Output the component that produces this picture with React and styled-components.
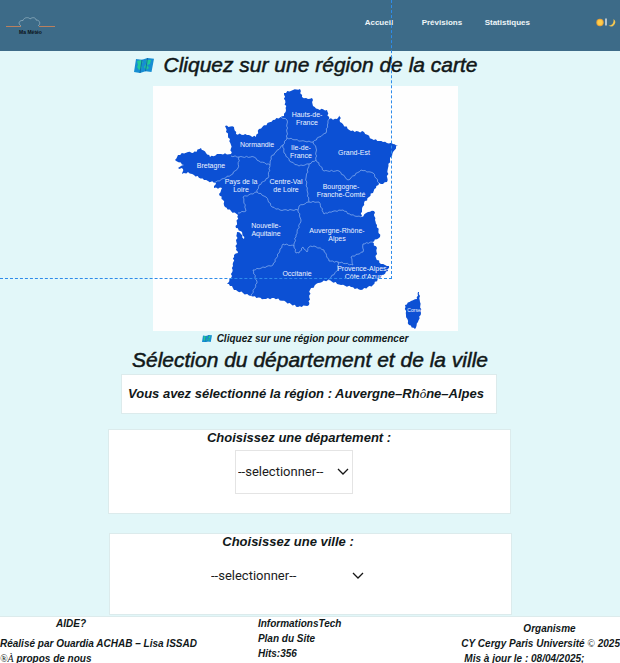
import React from "react";
import styled, { createGlobalStyle, css } from "styled-components";

const GlobalStyle = createGlobalStyle`
  *, *::before, *::after { box-sizing: border-box; }
  html { background: #e2f7f9; }
  body {
    margin: 0;
    font-family: "Liberation Sans", Arial, sans-serif;
    color: #111819;
    overflow-x: hidden;
  }
  h1, h2, p { margin: 0; }
`;

const Page = styled.div`
  position: relative;
  display: flex;
  flex-direction: column;
  background: #e2f7f9;
`;

const Header = styled.header`
  display: flex;
  align-items: center;
  justify-content: space-between;
  height: 51px;
  padding: 0 4px 6px 6px;
  background: #3d6b88;
`;

const Brand = styled.a`
  display: flex;
  flex-direction: column;
  align-items: center;
  width: 49px;
  padding-top: 7px;
  color: #0b1218;
  font-size: 5px;
  line-height: 8px;
  font-weight: 700;
  text-decoration: none;
  svg { display: block; }
`;

const Nav = styled.nav`
  display: grid;
  grid-template-columns: 57px 63px auto;
  align-items: center;
  margin-left: auto;
  margin-right: 66px;
`;

const NavLink = styled.a`
  color: #eef5f8;
  font: 700 8px/12px "Liberation Sans", sans-serif;
  text-decoration: none;
`;

const ThemeToggle = styled.button`
  display: flex;
  padding: 0;
  border: 0;
  background: none;
  svg { display: block; }
`;

const Main = styled.main`
  display: flex;
  flex-direction: column;
  align-items: center;
`;

const heading = css`
  font-size: 21px;
  line-height: 28px;
  font-weight: 400;
  font-style: italic;
  -webkit-text-stroke: 0.5px currentColor;
`;

const Title = styled.h1`
  ${heading}
  display: flex;
  align-items: center;
  gap: 9px;
  padding: 0 8px 7px 0;
`;

const MapFrame = styled.figure`
  width: 100%;
  max-width: 305px;
  margin: 0 10px 0 0;
  background: #fefefe;
  svg { display: block; width: 100%; }
`;

const Hint = styled.p`
  display: flex;
  align-items: center;
  gap: 5px;
  padding-right: 10px;
  font-size: 10px;
  line-height: 15px;
  font-weight: 700;
  font-style: italic;
`;

const SectionTitle = styled.h2`
  ${heading}
`;

const panel = css`
  border: 1px solid #dcebec;
  background: #fff;
`;

const Selected = styled.p`
  ${panel}
  width: 100%;
  max-width: 376px;
  margin-right: 2px;
  padding: 9px 6px;
  font-size: 13px;
  line-height: 20px;
  font-weight: 700;
  font-style: italic;
`;

const Field = styled.section`
  ${panel}
  display: flex;
  flex-direction: column;
  align-items: center;
  width: 100%;
  max-width: 403px;
  min-height: ${(p) => (p.$short ? 82 : 85)}px;
  margin-top: ${(p) => (p.$short ? 19 : 15)}px;
  margin-right: ${(p) => (p.$short ? 0 : 2)}px;
  margin-bottom: ${(p) => (p.$short ? 1 : 0)}px;
`;

const FieldLabel = styled.label`
  padding-right: ${(p) => (p.$wide ? 44 : 20)}px;
  font-size: 13px;
  line-height: 16px;
  font-weight: 700;
  font-style: italic;
`;

const SelectBox = styled.div`
  display: grid;
  grid-template-columns: 1fr;
  align-items: center;
  width: ${(p) => (p.$plain ? 158 : 118)}px;
  height: 44px;
  margin-top: 4px;
  margin-right: ${(p) => (p.$plain ? 46 : 30)}px;
  border: 1px solid ${(p) => (p.$plain ? "transparent" : "#e4e4e4")};
  svg {
    grid-area: 1 / 1;
    justify-self: end;
    margin-right: ${(p) => (p.$plain ? 1 : 3)}px;
    pointer-events: none;
  }
`;

const Select = styled.select`
  grid-area: 1 / 1;
  width: 100%;
  height: 42px;
  padding: 0 0 0 2px;
  border: 0;
  background: transparent;
  appearance: none;
  color: #1b1b1b;
  font: 400 13px/20px Roboto, sans-serif;
`;

const Footer = styled.footer`
  display: grid;
  grid-template-columns: auto 1fr auto;
  border-top: 1px solid #dcebec;
  background: #fff;
  font-size: 10px;
  line-height: 13px;
  font-weight: 700;
  font-style: italic;
  white-space: nowrap;
  column-gap: 61px;
`;

const FooterColumn = styled.div`
  display: flex;
  flex-direction: column;
  gap: 2px;
  padding-top: ${(p) => p.$top || 0}px;
`;

const FooterLine = styled.p`
  padding-left: ${(p) => p.$indent || 0}px;
  padding-bottom: ${(p) => p.$after || 0}px;
`;

const FooterLink = styled.a`
  color: inherit;
  text-decoration: none;
`;

const Serif = styled.span`
  font-family: "Liberation Serif", serif;
  font-weight: 400;
  line-height: 1;
`;

const Guide = styled.div`
  position: absolute;
  top: 0;
  left: 0;
  width: 392px;
  height: 279px;
  border-right: 1px dashed #2f8cea;
  border-bottom: 1px dashed #2f8cea;
  pointer-events: none;
`;

function MapIcon({ size }) {
  return (
    <svg width={size} height={size * 0.75} viewBox="0 0 20 15" aria-hidden="true">
      <path d="M2 1l6 .8L13.500 0 20 .7 17.500 14l-6-.8L6 15 0 14z" fill="#168ed2" />
      <path d="M3 3l4-1 2 2-2 3 1 3-3 2-2-3 1-2zM12 2l5 0-1 4-3 1 2 3-3 2-2-3 2-3z" fill="#20c998" />
      <path d="M8 1.800L6 15M13.500 0l-2 13.200" stroke="#126ba9" strokeWidth="1" />
    </svg>
  );
}

function Chevron() {
  return (
    <svg width="12" height="8" viewBox="0 0 12 8" fill="none" aria-hidden="true">
      <path d="M1 1l5 5 5-5" stroke="#161616" strokeWidth="1.300" />
    </svg>
  );
}

/* Adds small alternating bumps between survey points so coasts and borders look natural. */
function trace(points, depth, closed) {
  const n = points.length;
  let d = `M${points[0]}`;
  for (let i = 0; i < (closed ? n : n - 1); i++) {
    const [ax, ay] = points[i];
    const [bx, by] = points[(i + 1) % n];
    const len = Math.hypot(bx - ax, by - ay) || 1;
    const steps = Math.max(1, Math.round(len / 2));
    for (let s = 1; s < steps; s++) {
      const k = s / steps;
      const off = Math.sin(s * 2.3 + i * 1.7) * depth;
      const x = ax + (bx - ax) * k - ((by - ay) / len) * off;
      const y = ay + (by - ay) * k + ((bx - ax) / len) * off;
      d += `L${x.toFixed(1)} ${y.toFixed(1)}`;
    }
    d += `L${bx} ${by}`;
  }
  return closed ? d + "Z" : d;
}

const coast = [
  [283, 93], [292, 90], [299, 89], [301, 97], [307, 99], [311, 98], [312, 106], [317, 109], [326, 110],
  [328, 119], [336, 119], [339, 114], [339, 122], [350, 131], [363, 132], [371, 139], [382, 142],
  [392, 144], [397, 145], [392, 152], [389, 160], [387, 168], [386, 182], [382, 184], [378, 183],
  [375, 188], [368, 197], [363, 203], [361, 210], [360, 217], [367, 212], [373, 211], [374, 220],
  [376, 225], [379, 237], [371, 242], [376, 248], [375, 258], [380, 264], [388, 266], [387, 271],
  [378, 278], [372, 285], [360, 290], [350, 287], [340, 285], [327, 280], [317, 283], [309, 290],
  [308, 305], [297, 307], [285, 302], [273, 298], [263, 299], [250, 296], [242, 293], [233, 290],
  [231, 286], [226, 284], [230, 278], [232, 266], [233, 255], [237, 253], [235, 250], [236, 232],
  [240, 234], [243, 239], [241, 232], [235, 228], [237, 215], [230, 211], [224, 207], [222, 200],
  [218, 194], [221, 188], [213, 188], [215, 183], [203, 180], [193, 175], [187, 172], [181, 174],
  [182, 169], [177, 168], [183, 165], [174, 160], [177, 155], [187, 152], [192, 153], [200, 148],
  [205, 153], [209, 157], [218, 154], [230, 154], [230, 145], [224, 126], [233, 127], [235, 134],
  [246, 135], [255, 137], [258, 129], [272, 120], [283, 116], [285, 110],
];

const corsica = [
  [418, 292], [419, 302], [420, 313], [417, 322], [414, 329], [408, 325], [405, 315], [404, 305],
  [410, 301], [416, 299], [417, 292],
];

const borders = [
  [[280, 117], [286, 120], [286, 138], [282, 145], [275, 152], [270, 157], [269, 165], [267, 178], [258, 185], [256, 192]],
  [[286, 138], [300, 141], [312, 142], [318, 137], [325, 133], [327, 123], [328, 119]],
  [[312, 142], [315, 148], [315, 160], [308, 164], [298, 166], [290, 162], [283, 153], [282, 145]],
  [[230, 156], [238, 157], [253, 157], [258, 161], [269, 165]],
  [[238, 157], [237, 168], [230, 175], [213, 183]],
  [[256, 192], [242, 197], [245, 211], [237, 213]],
  [[256, 192], [265, 197], [271, 207], [279, 210], [297, 210], [298, 206], [308, 202], [306, 190], [305, 178], [308, 164]],
  [[297, 210], [300, 220], [295, 235], [293, 246], [282, 244], [272, 265], [252, 270], [256, 283], [250, 296]],
  [[293, 246], [295, 253], [298, 253], [302, 247], [306, 252], [308, 247], [313, 246], [323, 250], [328, 261], [337, 262], [337, 270], [327, 280]],
  [[337, 262], [352, 265], [350, 257], [362, 252], [362, 244], [371, 242]],
  [[308, 202], [318, 202], [323, 214], [328, 212], [342, 210], [350, 215], [360, 217]],
  [[315, 160], [323, 171], [338, 171], [347, 180], [360, 170], [372, 173], [378, 183]],
];

const labels = [
  [306, 117, "Hauts-de-", "France"],
  [256, 147, "Normandie"],
  [300, 150, "Ile-de-", "France"],
  [353, 155, "Grand-Est"],
  [210, 168, "Bretagne"],
  [240, 184, "Pays de la", "Loire"],
  [285, 184, "Centre-Val", "de Loire"],
  [340, 189, "Bourgogne-", "Franche-Comté"],
  [265, 228, "Nouvelle-", "Aquitaine"],
  [336, 233, "Auvergne-Rhône-", "Alpes"],
  [296, 276, "Occitanie"],
  [362, 271, "Provence-Alpes-", "Côte d’Azur"],
];

function FranceMap() {
  return (
    <svg viewBox="152 86 305 245" role="img" aria-label="Carte des régions de France">
      <g fill="#0c50d4">
        <path d={trace(coast, 0.8, true)} />
        <path d={trace(corsica, 0.6, true)} />
      </g>
      <g fill="none" stroke="#8fb4ef" strokeWidth="0.7">
        {borders.map((b, i) => <path key={i} d={trace(b, 0.6, false)} />)}
      </g>
      <g fill="#eef4ff" fontFamily="Liberation Sans, sans-serif" fontSize="7" textAnchor="middle">
        {labels.map(([x, y, first, second]) => (
          <text key={first} x={x} y={y}>
            {first}
            {second && <tspan x={x} dy="8">{second}</tspan>}
          </text>
        ))}
        <text x="413" y="312" fontSize="5">Corse</text>
      </g>
    </svg>
  );
}

export default function App() {
  return (
    <>
      <GlobalStyle />
      <Page>
        <Header>
          <Brand href="#">
            <svg width="49" height="11" viewBox="0 0 49 11" fill="none" aria-hidden="true">
              <path d="M0 9.500h15M33 9.500h16" stroke="#b9805f" />
              <path d="M15 9C11 6 14 3 17 3.500C18 0 23 0 24 2C27-.5 30 1 30 3C34 3 35 7 32 9" stroke="#91afbf" strokeWidth=".8" />
            </svg>
            Ma Météo
          </Brand>
          <Nav>
            <NavLink href="#accueil">Accueil</NavLink>
            <NavLink href="#previsions">Prévisions</NavLink>
            <NavLink href="#statistiques">Statistiques</NavLink>
          </Nav>
          <ThemeToggle type="button" aria-label="Changer de thème">
            <svg width="20" height="9" viewBox="0 0 20 9">
              <circle cx="4" cy="4.500" r="3.700" fill="#e9a23a" />
              <circle cx="4" cy="4.500" r="2.700" fill="#ffcd48" />
              <path d="M10 .5v7" stroke="#f2f5f7" strokeWidth="1.300" />
              <path d="M17.500 1a4 4 0 1 1-5 6.500C16 7.500 18 5 17.500 1z" fill="#f5c751" />
            </svg>
          </ThemeToggle>
        </Header>

        <Main>
          <Title><MapIcon size={20} />Cliquez sur une région de la carte</Title>
          <MapFrame><FranceMap /></MapFrame>
          <Hint><MapIcon size={10} />Cliquez sur une région pour commencer</Hint>
          <SectionTitle>Sélection du département et de la ville</SectionTitle>
          <Selected>
            Vous avez sélectionné la région : Auvergne–Rh<Serif>ô</Serif>ne–Alpes
          </Selected>

          <Field>
            <FieldLabel htmlFor="departement">Choisissez une département :</FieldLabel>
            <SelectBox>
              <Select id="departement"><option>--selectionner--</option></Select>
              <Chevron />
            </SelectBox>
          </Field>

          <Field $short>
            <FieldLabel $wide htmlFor="ville">Choisissez une ville :</FieldLabel>
            <SelectBox $plain>
              <Select id="ville"><option>--selectionner--</option></Select>
              <Chevron />
            </SelectBox>
          </Field>
        </Main>

        <Footer>
          <FooterColumn>
            <FooterLine $indent={56} $after={5}><FooterLink href="#aide">AIDE?</FooterLink></FooterLine>
            <FooterLine>Réalisé par Ouardia ACHAB – Lisa ISSAD</FooterLine>
            <FooterLine><Serif>®À</Serif> <FooterLink href="#apropos">propos de nous</FooterLink></FooterLine>
          </FooterColumn>
          <FooterColumn>
            <FooterLine><FooterLink href="#tech">InformationsTech</FooterLink></FooterLine>
            <FooterLine><FooterLink href="#plan">Plan du Site</FooterLink></FooterLine>
            <FooterLine>Hits:356</FooterLine>
          </FooterColumn>
          <FooterColumn $top={5}>
            <FooterLine $indent={62}>Organisme</FooterLine>
            <FooterLine>CY Cergy Paris Université <Serif>©</Serif> 2025</FooterLine>
            <FooterLine $indent={3}>Mis à jour le : 08/04/2025;</FooterLine>
          </FooterColumn>
        </Footer>
        <Guide />
      </Page>
    </>
  );
}
